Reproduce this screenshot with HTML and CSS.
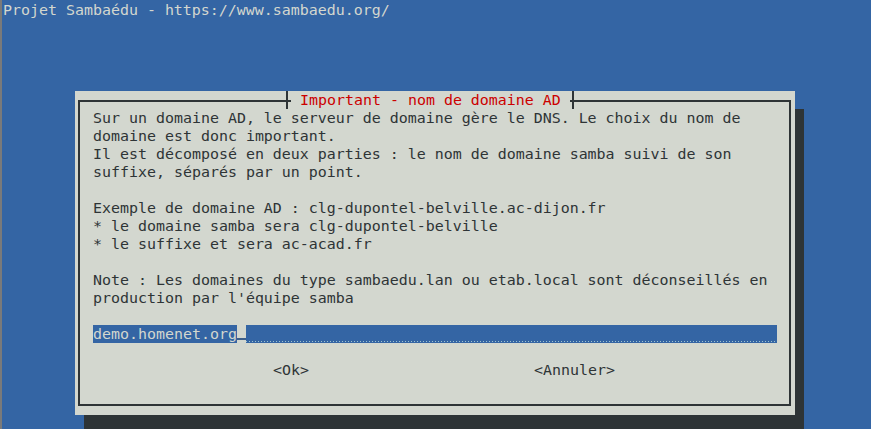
FILE: index.html
```html
<!DOCTYPE html>
<html lang="fr">
<head>
<meta charset="utf-8">
<title>Projet Sambaédu</title>
<link rel="stylesheet" href="styles.css">
</head>
<body>
<div class="term">
  <div class="topline">Projet Sambaédu - https://www.sambaedu.org/</div>
  <div class="dialog">
    <div class="frame">
      <div class="msg">Sur un domaine AD, le serveur de domaine gère le DNS. Le choix du nom de
domaine est donc important.
Il est décomposé en deux parties : le nom de domaine samba suivi de son
suffixe, séparés par un point.

Exemple de domaine AD : clg-dupontel-belville.ac-dijon.fr
* le domaine samba sera clg-dupontel-belville
* le suffixe et sera ac-acad.fr

Note : Les domaines du type sambaedu.lan ou etab.local sont déconseillés en
production par l'équipe samba</div>
      <div class="field"><span class="value">demo.homenet.org</span><span class="cursor"></span><span class="rest"></span></div>
      <div class="buttons"><span class="btn">&lt;Ok&gt;</span><span class="btn">&lt;Annuler&gt;</span></div>
    </div>
    <div class="title">Important - nom de domaine AD</div>
  </div>
</div>
</body>
</html>
```
FILE: styles.css
```css
html, body {
  margin: 0;
  padding: 0;
  height: 100%;
  overflow: hidden;
}
body {
  background: #3465a4;
  border-left: 2px solid #7a7a7a;
  box-sizing: border-box;
}
.term {
  padding: 1px 0 0 1px;
  font-family: "DejaVu Sans Mono", monospace;
  font-size: 14.95px;
  line-height: 18px;
  color: #2e3436;
}
.topline {
  height: 18px;
  color: #d3d7cf;
  white-space: pre;
}
.dialog {
  position: relative;
  margin: 72px 0 0 72px;
  width: 720px;
  height: 324px;
  box-sizing: border-box;
  padding: 9px 4px 9px 3px;
  background: #d3d7cf;
  box-shadow: 9px 18px 0 #2e3436;
  display: flex;
}
.frame {
  flex: 1;
  border: 2px solid #2e3436;
  padding: 7px 0 0 13px;
  display: flex;
  flex-direction: column;
}
.msg {
  white-space: pre;
  height: 198px;
}
.field {
  margin-top: 18px;
  width: 684px;
  height: 18px;
  display: flex;
  white-space: pre;
}
.value {
  background: #3465a4;
  color: #d3d7cf;
}
.cursor {
  width: 9px;
  flex: none;
  background-color: #d3d7cf;
  background-image: linear-gradient(#3d5f8a, #3d5f8a);
  background-size: 9px 2px;
  background-position: 0 13px;
  background-repeat: no-repeat;
}
.rest {
  flex: 1;
  background-color: #3465a4;
  background-image: repeating-linear-gradient(90deg, #9ec3cf 0 1px, transparent 1px 3px);
  background-size: 100% 1px;
  background-position: 0 16px;
  background-repeat: no-repeat;
}
.buttons {
  margin-top: 18px;
  padding-left: 180px;
  display: flex;
  gap: 225px;
  white-space: pre;
}
.title {
  position: absolute;
  top: 0;
  left: 216px;
  width: 279px;
  height: 18px;
  box-sizing: border-box;
  padding: 0 9px;
  background: #d3d7cf;
  color: #cc0000;
  white-space: pre;
}
.title::before,
.title::after {
  content: "";
  position: absolute;
  top: 0;
  width: 2px;
  height: 18px;
  background: #2e3436;
}
.title::before { left: -5px; }
.title::after { right: -4px; }
```
